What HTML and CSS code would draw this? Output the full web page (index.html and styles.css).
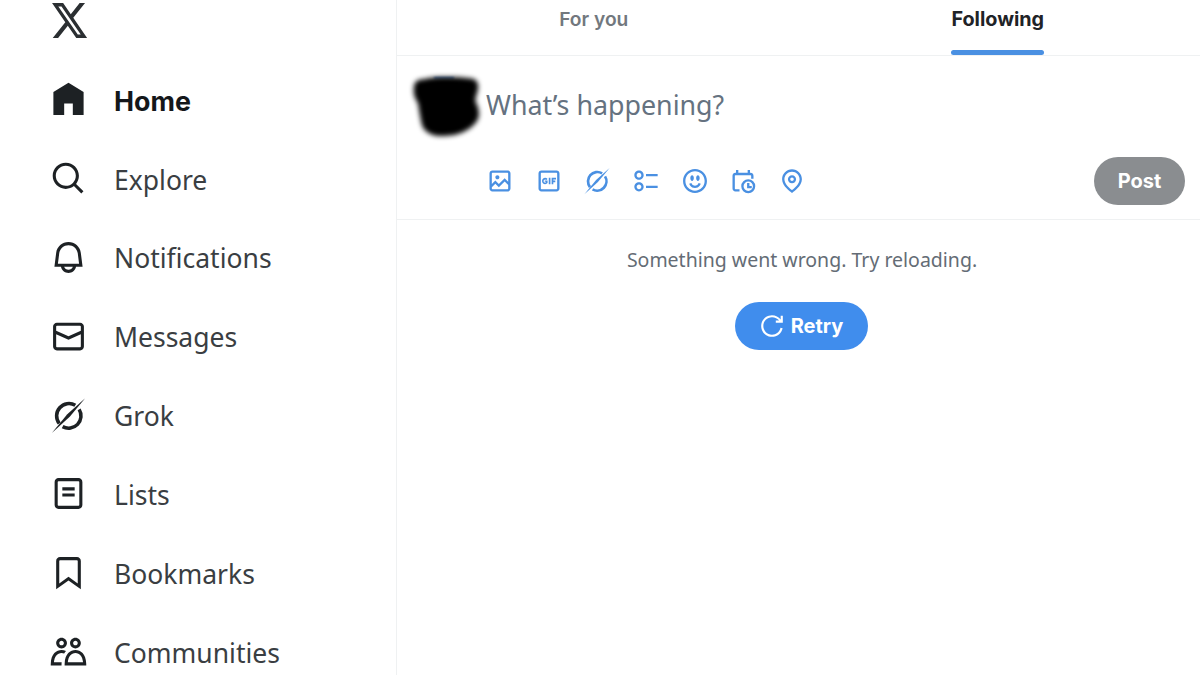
FILE: index.html
```html
<!DOCTYPE html>
<html lang="en">
<head>
<meta charset="utf-8">
<title>Home / X</title>
<link rel="stylesheet" href="styles.css">
</head>
<body>
<div class="app">
  <nav class="sidebar">
    <div class="logo">
      <svg viewBox="0 0 24 24" preserveAspectRatio="none" class="logo-icon"><path d="M18.244 2.25h3.308l-7.227 8.26 8.502 11.24H16.17l-5.214-6.817L4.99 21.75H1.68l7.73-8.835L1.254 2.25H8.08l4.713 6.231zm-1.161 17.52h1.833L7.084 4.126H5.117z"/></svg>
    </div>
    <a class="nav-item active">
      <svg viewBox="0 0 24 24" class="nav-icon"><path d="M12 1.2 21.8 7.2V22H14.8V14.6H9.2V22H2.2V7.2z"/></svg>
      <span>Home</span>
    </a>
    <a class="nav-item">
      <svg viewBox="0 0 24 24" class="nav-icon"><path d="M10.25 3.75c-3.59 0-6.5 2.91-6.5 6.5s2.91 6.5 6.5 6.5c1.795 0 3.419-.726 4.596-1.904 1.178-1.177 1.904-2.801 1.904-4.596 0-3.59-2.91-6.5-6.5-6.5zm-8.5 6.5c0-4.694 3.806-8.5 8.5-8.5s8.5 3.806 8.5 8.5c0 1.986-.682 3.815-1.824 5.262l4.781 4.781-1.414 1.414-4.781-4.781c-1.447 1.142-3.276 1.824-5.262 1.824-4.694 0-8.5-3.806-8.5-8.5z"/></svg>
      <span>Explore</span>
    </a>
    <a class="nav-item">
      <svg viewBox="0 0 24 24" class="nav-icon"><path d="M19.993 9.042C19.48 5.017 16.054 2 11.996 2s-7.49 3.021-7.999 7.051L2.866 18H7.1c.463 2.282 2.481 4 4.9 4s4.437-1.718 4.9-4h4.236l-1.143-8.958zM12 20c-1.306 0-2.417-.835-2.829-2h5.658c-.412 1.165-1.523 2-2.829 2zm-6.866-4l.847-6.698C6.364 6.272 8.941 4 11.996 4s5.627 2.268 6.013 5.295L18.864 16H5.134z"/></svg>
      <span>Notifications</span>
    </a>
    <a class="nav-item">
      <svg viewBox="0 0 24 24" class="nav-icon"><path d="M1.998 5.5c0-1.381 1.119-2.5 2.5-2.5h15c1.381 0 2.5 1.119 2.5 2.5v13c0 1.381-1.119 2.5-2.5 2.5h-15c-1.381 0-2.5-1.119-2.5-2.5v-13zm2.5-.5c-.276 0-.5.224-.5.5v2.764l8 3.638 8-3.636V5.5c0-.276-.224-.5-.5-.5h-15zm15.5 5.463l-8 3.636-8-3.638V18.5c0 .276.224.5.5.5h15c.276 0 .5-.224.5-.5v-8.037z"/></svg>
      <span>Messages</span>
    </a>
    <a class="nav-item">
      <svg viewBox="0 0 24 24" class="nav-icon"><path class="grok-ring" d="M16.4 5.4A8 8 0 0 0 6 17.2M8.2 19.2A8 8 0 0 0 18.9 8"/><path class="grok-slash" d="M22.8.8 12.8 12.8 1.2 23.4 11.2 11.2z"/></svg>
      <span>Grok</span>
    </a>
    <a class="nav-item">
      <svg viewBox="0 0 24 24" class="nav-icon"><path d="M3 4.5C3 3.12 4.12 2 5.5 2h13C19.88 2 21 3.12 21 4.5v15c0 1.38-1.12 2.5-2.5 2.5h-13C4.12 22 3 20.88 3 19.5v-15zM5.5 4c-.28 0-.5.22-.5.5v15c0 .28.22.5.5.5h13c.28 0 .5-.22.5-.5v-15c0-.28-.22-.5-.5-.5h-13zM16 10H8V8h8v2zm-8 2h8v2H8v-2z"/></svg>
      <span>Lists</span>
    </a>
    <a class="nav-item">
      <svg viewBox="0 0 24 24" class="nav-icon"><path d="M4 4.5C4 3.12 5.119 2 6.5 2h11C18.881 2 20 3.12 20 4.5v18.44l-8-5.71-8 5.71V4.5zM6.5 4c-.276 0-.5.22-.5.5v14.56l6-4.29 6 4.29V4.5c0-.28-.224-.5-.5-.5h-11z"/></svg>
      <span>Bookmarks</span>
    </a>
    <a class="nav-item">
      <svg viewBox="0 0 24 24" class="nav-icon"><path d="M7.501 19.917L7.471 21H.472l.029-1.027c.184-6.618 3.736-8.977 7-8.977.963 0 1.95.212 2.87.672-.444.478-.851 1.03-1.212 1.656-.507-.204-1.054-.329-1.658-.329-2.767 0-4.57 2.223-4.938 6.004H7.56c-.023.302-.05.599-.059.917zm15.998.056L23.528 21H9.472l.029-1.027c.184-6.618 3.736-8.977 7-8.977s6.816 2.358 7 8.977zM21.437 19c-.367-3.781-2.17-6.004-4.938-6.004s-4.57 2.223-4.938 6.004h9.875zm-4.938-9c-.799 0-1.527-.279-2.116-.73-.836-.64-1.384-1.638-1.384-2.77 0-1.93 1.567-3.5 3.5-3.5s3.5 1.57 3.5 3.5c0 1.132-.548 2.13-1.384 2.77-.589.451-1.317.73-2.116.73zm-1.5-3.5c0 .827.673 1.5 1.5 1.5s1.5-.673 1.5-1.5-.673-1.5-1.5-1.5-1.5.673-1.5 1.5zM7.5 3C9.433 3 11 4.57 11 6.5S9.433 10 7.5 10 4 8.43 4 6.5 5.567 3 7.5 3zm0 2C6.673 5 6 5.673 6 6.5S6.673 8 7.5 8 9 7.327 9 6.5 8.327 5 7.5 5z"/></svg>
      <span>Communities</span>
    </a>
  </nav>

  <main class="timeline">
    <header class="tabs">
      <div class="tab tab-foryou"><span class="tab-label">For you</span></div>
      <div class="tab tab-active"><span class="tab-label">Following<i class="tab-bar"></i></span></div>
    </header>

    <section class="composer">
      <div class="composer-top">
        <svg class="avatar" viewBox="0 0 68 64">
          <path class="avatar-edge" d="M22 3H42"/>
          <path class="avatar-blot" d="M3 12C3 6 8 5 13 5 24 2 44 3 55 4 64 4 66 8 65 14 64 20 61 23 63 28 67 34 67 42 63 47 58 54 44 61 30 60 20 60 13 56 11 50 9 42 8 34 7 28 3 22 2 17 3 12z"/>
        </svg>
        <div class="placeholder">What’s happening?</div>
      </div>
      <div class="composer-bottom">
        <div class="tools">
          <svg viewBox="0 0 24 24" class="tool"><path d="M3 5.5C3 4.119 4.119 3 5.5 3h13C19.881 3 21 4.119 21 5.5v13c0 1.381-1.119 2.5-2.5 2.5h-13C4.119 21 3 19.881 3 18.5v-13zM5.5 5c-.276 0-.5.224-.5.5v9.086l3-3 3 3 5-5 3 3V5.5c0-.276-.224-.5-.5-.5h-13zM19 15.414l-3-3-5 5-3-3-3 3V18.5c0 .276.224.5.5.5h13c.276 0 .5-.224.5-.5v-3.086zM9.75 7C8.784 7 8 7.784 8 8.75s.784 1.75 1.75 1.75 1.75-.784 1.75-1.75S10.716 7 9.75 7z"/></svg>
          <svg viewBox="0 0 24 24" class="tool"><path d="M3 5.5C3 4.119 4.12 3 5.5 3h13C19.88 3 21 4.119 21 5.5v13c0 1.381-1.12 2.5-2.5 2.5h-13C4.12 21 3 19.881 3 18.5v-13zM5.5 5c-.28 0-.5.224-.5.5v13c0 .276.22.5.5.5h13c.28 0 .5-.224.5-.5v-13c0-.276-.22-.5-.5-.5h-13zM18 10.711V9.25h-3.74v5.5h1.44v-1.719h1.7V11.57h-1.7v-.859H18zM11.79 9.25h1.44v5.5h-1.44v-5.5zm-3.07 1.375c.34 0 .77.172 1.02.43l1.03-.86c-.51-.601-1.28-.945-2.05-.945C7.19 9.25 6 10.453 6 12s1.19 2.75 2.72 2.75c.85 0 1.54-.344 2.05-.945v-2.149H8.38v1.032H9.4v.515c-.17.086-.42.172-.68.172-.76 0-1.36-.602-1.36-1.375 0-.688.6-1.375 1.36-1.375z"/></svg>
          <svg viewBox="0 0 24 24" class="tool"><path class="grok-ring" d="M16.4 5.4A8 8 0 0 0 6 17.2M8.2 19.2A8 8 0 0 0 18.9 8"/><path class="grok-slash" d="M22.8.8 12.8 12.8 1.2 23.4 11.2 11.2z"/></svg>
          <svg viewBox="0 0 24 24" class="tool"><path d="M6 5c-1.1 0-2 .895-2 2s.9 2 2 2 2-.895 2-2-.9-2-2-2zM2 7c0-2.209 1.79-4 4-4s4 1.791 4 4-1.79 4-4 4-4-1.791-4-4zm20 1H12V6h10v2zM6 15c-1.1 0-2 .895-2 2s.9 2 2 2 2-.895 2-2-.9-2-2-2zm-4 2c0-2.209 1.79-4 4-4s4 1.791 4 4-1.79 4-4 4-4-1.791-4-4zm20 1H12v-2h10v2z"/></svg>
          <svg viewBox="0 0 24 24" class="tool"><path d="M8 9.5C8 8.119 8.672 7 9.5 7S11 8.119 11 9.5 10.328 12 9.5 12 8 10.881 8 9.5zm6.5 2.5c.828 0 1.5-1.119 1.5-2.5S15.328 7 14.5 7 13 8.119 13 9.5s.672 2.5 1.5 2.5zM12 16c-2.224 0-3.021-2.227-3.051-2.316l-1.897.633c.05.15 1.271 3.684 4.949 3.684s4.898-3.533 4.949-3.684l-1.896-.638c-.033.095-.83 2.322-3.053 2.322zm10.25-4.001c0 5.652-4.598 10.25-10.25 10.25S1.75 17.652 1.75 12 6.348 1.75 12 1.75 22.25 6.348 22.25 12zm-2 0c0-4.549-3.701-8.25-8.25-8.25S3.75 7.451 3.75 12s3.701 8.25 8.25 8.25 8.25-3.701 8.25-8.25z"/></svg>
          <svg viewBox="0 0 24 24" class="tool"><path d="M6 5V2.5h2V5h8V2.5h2V5h.5C19.881 5 21 6.119 21 7.5V10h-2V7.5c0-.276-.224-.5-.5-.5h-13c-.276 0-.5.224-.5.5v11c0 .276.224.5.5.5H9v2H5.5C4.119 21 3 19.881 3 18.5v-11C3 6.119 4.119 5 5.5 5H6z"/><path d="M16.5 10.5a6 6 0 1 0 0 12 6 6 0 0 0 0-12zm0 2a4 4 0 1 1 0 8 4 4 0 0 1 0-8zM15.5 13.8h2v2.4h2v2h-4z"/></svg>
          <svg viewBox="0 0 24 24" class="tool"><path d="M12 7c-1.93 0-3.5 1.57-3.5 3.5S10.07 14 12 14s3.5-1.57 3.5-3.5S13.93 7 12 7zm0 5c-.827 0-1.5-.673-1.5-1.5S11.173 9 12 9s1.5.673 1.5 1.5S12.827 12 12 12zm0-10c-4.687 0-8.5 3.813-8.5 8.5 0 5.967 7.621 11.116 7.945 11.332l.555.37.555-.37c.324-.216 7.945-5.365 7.945-11.332C20.5 5.813 16.687 2 12 2zm0 17.77c-1.665-1.241-6.5-5.196-6.5-9.27C5.5 6.916 8.416 4 12 4s6.5 2.916 6.5 6.5c0 4.073-4.835 8.028-6.5 9.27z"/></svg>
        </div>
        <button class="post-btn">Post</button>
      </div>
    </section>

    <section class="error">
      <p class="error-text">Something went wrong. Try reloading.</p>
      <button class="retry-btn">
        <svg viewBox="0 0 24 24" class="retry-icon"><path d="M12 4c-4.418 0-8 3.58-8 8s3.582 8 8 8c3.866 0 7.092-2.74 7.84-6.38l1.96.4C20.87 18.58 16.84 22 12 22 6.477 22 2 17.52 2 12S6.477 2 12 2c3.27 0 6.17 1.57 8 4V2.5h2V9h-6.5V7h3.1C17.16 5.18 14.72 4 12 4z"/></svg>
        <span>Retry</span>
      </button>
    </section>
  </main>
</div>
</body>
</html>
```

FILE: styles.css
```css
* { box-sizing: border-box; }
html, body {
  margin: 0;
  height: 675px;
  overflow: hidden;
  background: #fff;
}
body {
  font-family: "Noto Sans", "Open Sans", sans-serif;
  color: #2f3336;
}
.app {
  display: flex;
  height: 675px;
}
.sidebar {
  width: 397px;
  flex: none;
  border-right: 1px solid #eff1f2;
  padding-left: 50px;
  overflow: hidden;
}
.logo {
  height: 61px;
}
.logo-icon {
  display: block;
  width: 39px;
  height: 43px;
  margin-top: -1px;
  fill: #2b2f32;
}
.nav-item {
  display: flex;
  align-items: center;
  gap: 27px;
  height: 78.9px;
  font-size: 26.5px;
  color: #3a3e42;
}
.nav-item span {
  line-height: 1;
  padding-top: 3px;
}
.nav-item.active {
  font-family: Inter, sans-serif;
  font-size: 26.8px;
  font-weight: 700;
  color: #14171a;
}
.nav-icon {
  flex: none;
  width: 37px;
  height: 37px;
  fill: #1d2124;
}
.grok-ring {
  fill: none;
  stroke-width: 2.3;
}
.nav-icon .grok-ring { stroke: #1d2124; }
.tool .grok-ring { stroke: #4a90e2; }
.timeline {
  flex: 1;
  min-width: 0;
}
.tabs {
  display: grid;
  grid-template-columns: 1fr 1fr;
  height: 56px;
  padding-right: 2px;
  border-bottom: 1px solid #eff1f2;
}
.tab {
  display: flex;
  justify-content: center;
  font-family: Inter, sans-serif;
  font-size: 19.8px;
}
.tab-foryou {
  padding-right: 7px;
  font-size: 19.2px;
  font-weight: 600;
  color: #72787e;
}
.tab-active {
  color: #1f2327;
  font-weight: 700;
}
.tab-label {
  display: flex;
  flex-direction: column;
  justify-content: space-between;
  height: 55px;
  padding-top: 7px;
  line-height: 24px;
}
.tab-bar {
  display: block;
  height: 5px;
  border-radius: 3px;
  background: #4a90e2;
}
.composer {
  height: 164px;
  padding: 20px 15px 0;
  border-bottom: 1px solid #eff1f2;
}
.composer-top {
  display: flex;
  height: 62px;
  gap: 6px;
}
.avatar {
  flex: none;
  width: 68px;
  height: 64px;
  margin-top: -1px;
  overflow: visible;
}
.avatar-blot {
  fill: #000;
  stroke: #000;
  stroke-width: 2;
  stroke-linejoin: round;
  filter: blur(2.5px);
}
.avatar-edge {
  fill: none;
  stroke: #5b8fd6;
  stroke-width: 2;
  filter: blur(1px);
}
.placeholder {
  font-size: 26.8px;
  line-height: 36px;
  padding-top: 11px;
  color: #657280;
}
.composer-bottom {
  display: flex;
  justify-content: space-between;
  align-items: center;
  margin-top: 19px;
}
.tools {
  display: flex;
  gap: 20.7px;
  margin-left: 74px;
}
.tool {
  flex: none;
  width: 28px;
  height: 28px;
  fill: #4a90e2;
}
.post-btn {
  width: 91px;
  height: 48px;
  border: 0;
  border-radius: 24px;
  background: #8a8d90;
  color: #fff;
  font-family: Inter, sans-serif;
  font-size: 20px;
  font-weight: 700;
}
.error {
  display: flex;
  flex-direction: column;
  align-items: center;
  padding: 24px 0 0 7px;
}
.error-text {
  margin: 0;
  font-size: 19.5px;
  line-height: 32px;
  color: #646c75;
}
.retry-btn {
  display: flex;
  align-items: center;
  justify-content: center;
  gap: 6px;
  width: 133px;
  height: 48px;
  margin: 26px 2px 0 0;
  border: 0;
  border-radius: 24px;
  background: #408ded;
  color: #fff;
  font-family: Inter, sans-serif;
  font-size: 20px;
  font-weight: 700;
}
.retry-icon {
  width: 26px;
  height: 26px;
  fill: #fff;
}
```
